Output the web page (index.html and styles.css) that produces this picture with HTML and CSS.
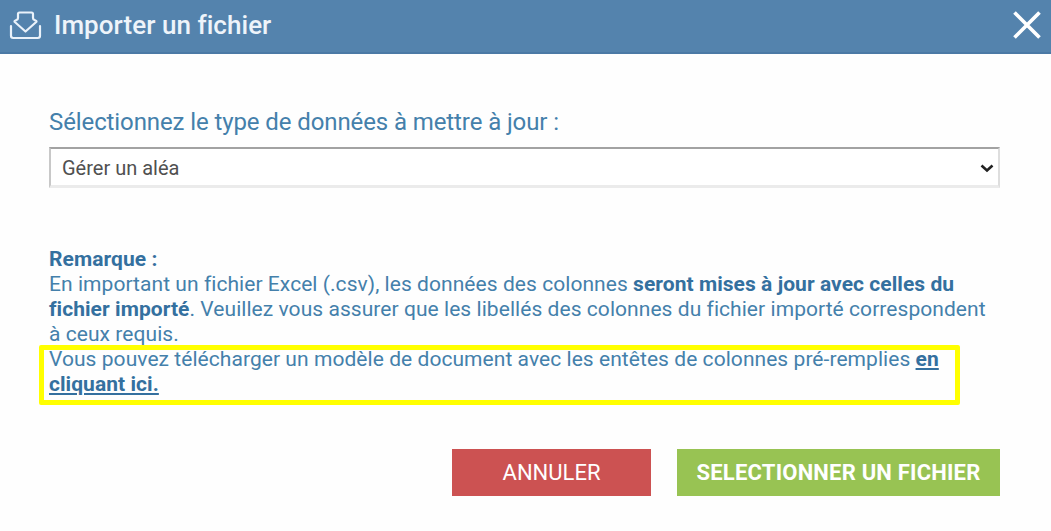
FILE: index.html
```html
<!DOCTYPE html>
<html lang="fr">
<head>
    <meta charset="UTF-8">
    <meta name="viewport" content="width=device-width, initial-scale=1.0">
    <title>Importer un fichier</title>
    <link rel="stylesheet" href="styles.css">
</head>
<body>
    <div class="modal">
        <header class="modal-header">
            <svg class="icon-import" viewBox="0 0 34 30" fill="none" stroke="currentColor" stroke-width="2.2" stroke-linejoin="round" stroke-linecap="round">
                <path d="M11.500 2.500h12q1.500 0 1.500 1.500v4q0 1.500 1.500 2l1.700.9q.6.500 0 1.100L17.500 21.500 6.800 12q-.6-.6 0-1.100l1.700-.9q1.500-.500 1.500-2V4q0-1.500 1.500-1.500z"/>
                <path d="M3 16v9.800q0 2.200 2.200 2.200h24.600q2.200 0 2.200-2.200V16"/>
            </svg>
            <h1>Importer un fichier</h1>
            <button class="close" aria-label="Fermer">
                <svg viewBox="0 0 28 28" fill="none" stroke="currentColor" stroke-width="3.7">
                    <path d="M1.500 1.500l25 25M26.500 1.500l-25 25"/>
                </svg>
            </button>
        </header>

        <div class="modal-body">
            <label class="type-label" for="type">Sélectionnez le type de données à mettre à jour :</label>
            <div class="select-box">
                <select id="type">
                    <option>Gérer un aléa</option>
                </select>
                <svg class="chevron" viewBox="0 0 14 9" fill="none" stroke="currentColor" stroke-width="2.600">
                    <path d="M1.500 1.500L7 6.500l5.500-5"/>
                </svg>
            </div>

            <div class="note">
                <p><b>Remarque :</b></p>
                <p>
                    <span class="line">En important un fichier Excel (.csv), les données des colonnes <b>seront mises à jour avec celles du</b></span>
                    <span class="line"><b>fichier importé</b>. Veuillez vous assurer que les libellés des colonnes du fichier importé correspondent</span>
                    <span class="line">à ceux requis.</span>
                </p>
                <p class="template">
                    <span class="line">Vous pouvez télécharger un modèle de document avec les entêtes de colonnes pré-remplies <a href="#">en</a></span>
                    <span class="line"><a href="#">cliquant ici.</a></span>
                </p>
            </div>

            <div class="actions">
                <button class="btn btn-cancel">ANNULER</button>
                <button class="btn btn-select">SELECTIONNER UN FICHIER</button>
            </div>
        </div>
    </div>
</body>
</html>
```

FILE: styles.css
```css
* {
    margin: 0;
    padding: 0;
    box-sizing: border-box;
}

body {
    font-family: Roboto, "Liberation Sans", sans-serif;
    background-color: #fefefe;
    color: #4480ab;
    overflow: hidden;
}

button {
    border: none;
    font-family: inherit;
    cursor: pointer;
}

.modal-header {
    display: flex;
    align-items: center;
    height: 54px;
    padding: 0 10px 2px 8px;
    background-color: #5483ad;
    border-bottom: 2px solid #4b79a5;
    color: #fff;
}

.icon-import {
    width: 34px;
    height: 30px;
    color: #eaf2fa;
}

h1 {
    margin-left: 12px;
    font-size: 26px;
    font-weight: 500;
    letter-spacing: 0.05px;
    line-height: 30px;
    color: #eef4fa;
}

.close {
    display: flex;
    width: 28px;
    height: 28px;
    margin-left: auto;
    background: none;
    color: #fff;
}

.modal-body {
    padding: 53px 51px 0 49px;
}

.type-label {
    display: block;
    font-size: 24px;
    letter-spacing: -0.1px;
    line-height: 30px;
}

.select-box {
    position: relative;
    height: 41px;
    margin-top: 10px;
}

select {
    width: 100%;
    height: 100%;
    padding: 1px 12px 0 11px;
    appearance: none;
    background-color: #fff;
    border: 2px solid #a2a2a2;
    border-color: #a2a2a2 #dedede #ebebeb #c8c8c8;
    border-bottom-width: 3px;
    border-radius: 0;
    font-family: inherit;
    font-size: 20px;
    color: #505050;
}

.chevron {
    position: absolute;
    right: 6px;
    top: 17px;
    width: 14px;
    height: 9px;
    color: #222;
    pointer-events: none;
}

.note {
    margin-top: 59px;
    font-size: 21px;
    letter-spacing: 0.055px;
    line-height: 25px;
}

.line {
    display: block;
    white-space: nowrap;
}

.note b,
.note a {
    font-weight: 700;
    color: #34709f;
}

.template {
    position: relative;
}

/* yellow frame around the template link */
.template::after {
    content: "";
    box-sizing: border-box;
    position: absolute;
    left: -10px;
    top: -2px;
    width: 921px;
    height: 60px;
    border: 5px solid #ff0;
    border-radius: 2px;
    pointer-events: none;
}

.actions {
    display: flex;
    justify-content: flex-end;
    gap: 26px;
    margin-top: 52px;
}

.btn {
    height: 47px;
    font-size: 22px;
    color: #fff;
    white-space: nowrap;
}

.btn-cancel {
    width: 199px;
    background-color: #cc5252;
}

.btn-select {
    width: 323px;
    background-color: #98c353;
    font-weight: 700;
    letter-spacing: 0.2px;
}
```
